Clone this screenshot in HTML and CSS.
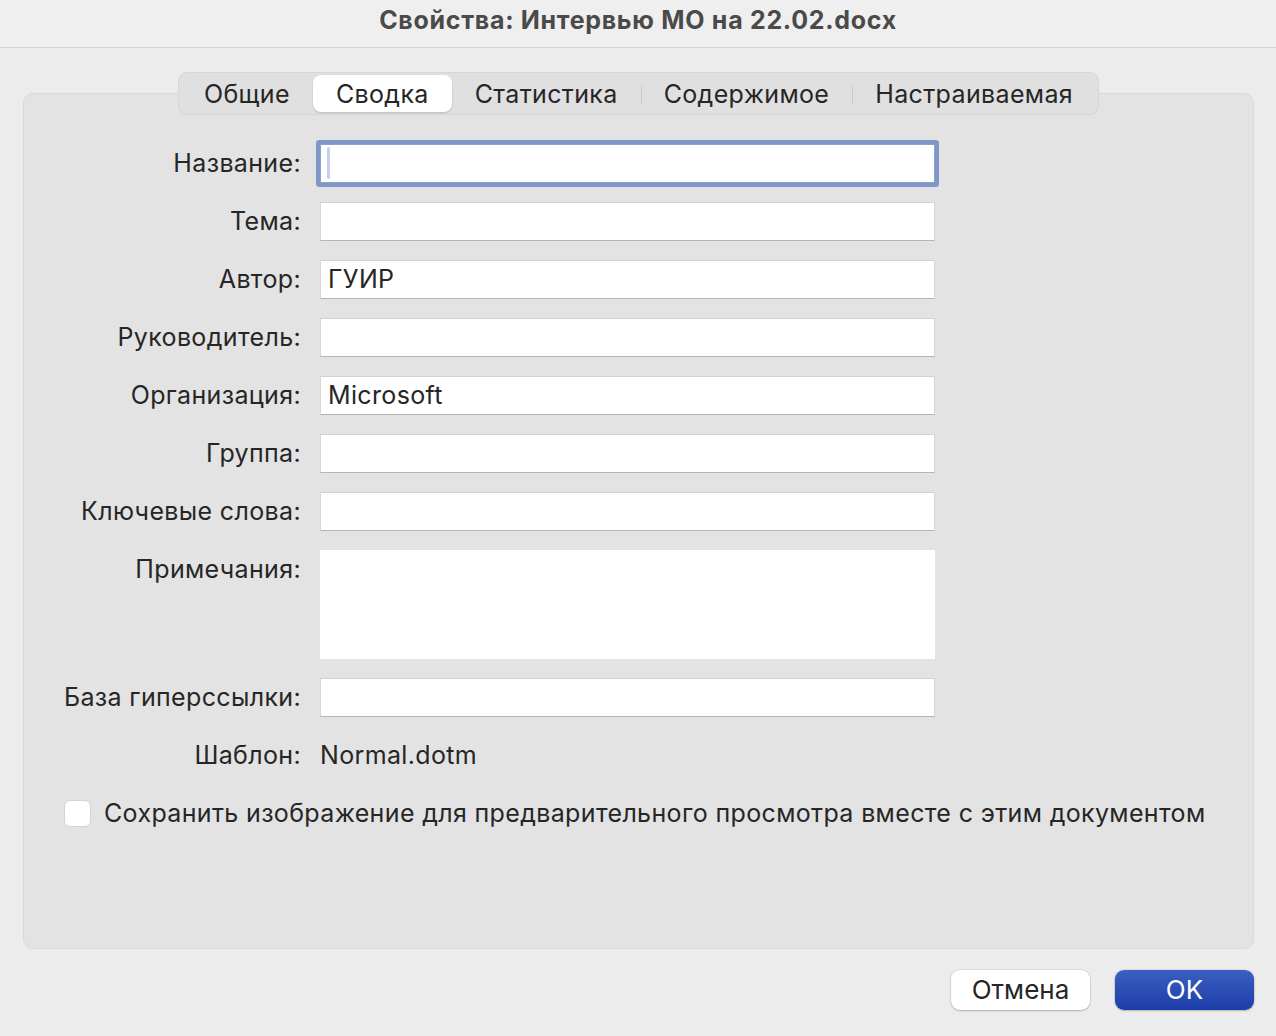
FILE: index.html
```html
<!DOCTYPE html>
<html lang="ru">
<head>
<meta charset="utf-8">
<title>Свойства</title>
<link rel="stylesheet" href="styles.css">
</head>
<body>
<div class="window">
  <div class="titlebar">Свойства: Интервью МО на 22.02.docx</div>
  <div class="content">
    <div class="tabs">
      <div class="tab">Общие</div>
      <div class="tab active">Сводка</div>
      <div class="tab">Статистика</div>
      <div class="tab sep">Содержимое</div>
      <div class="tab sep">Настраиваемая</div>
    </div>
    <div class="panel">
      <div class="form">
        <label class="lbl">Название:</label>
        <div class="field focused"><span class="caret"></span></div>
        <label class="lbl">Тема:</label>
        <div class="field"></div>
        <label class="lbl">Автор:</label>
        <div class="field">ГУИР</div>
        <label class="lbl">Руководитель:</label>
        <div class="field"></div>
        <label class="lbl">Организация:</label>
        <div class="field">Microsoft</div>
        <label class="lbl">Группа:</label>
        <div class="field"></div>
        <label class="lbl">Ключевые слова:</label>
        <div class="field"></div>
        <label class="lbl top">Примечания:</label>
        <div class="field area"></div>
        <label class="lbl">База гиперссылки:</label>
        <div class="field"></div>
        <label class="lbl">Шаблон:</label>
        <div class="value">Normal.dotm</div>
        <div class="check-row">
          <span class="checkbox"></span>
          <span class="check-text">Сохранить изображение для предварительного просмотра вместе с этим документом</span>
        </div>
      </div>
    </div>
    <div class="footer">
      <button class="btn">Отмена</button>
      <button class="btn primary">OK</button>
    </div>
  </div>
</div>
</body>
</html>
```
FILE: styles.css
```css
* { box-sizing: border-box; }
html, body { margin: 0; padding: 0; }
body {
  font-family: "Inter", "Noto Sans", sans-serif;
  background: #ececec;
  color: #262626;
}
.window {
  width: 1276px;
  height: 1036px;
  background: #ececec;
  overflow: hidden;
}
.titlebar {
  height: 48px;
  border-bottom: 1px solid #d3d3d3;
  background: #efefef;
  text-align: center;
  font-weight: 700;
  font-size: 25px;
  letter-spacing: 0.7px;
  line-height: 40px;
  color: #4a4a4a;
}
.content {
  padding: 24px 22px 0 23px;
}
.tabs {
  position: relative;
  z-index: 1;
  display: flex;
  width: fit-content;
  margin: 0 auto -22px;
  height: 43px;
  padding: 2px;
  background: #e0e0e0;
  border: 1px solid #d6d6d6;
  border-radius: 9px;
}
.tab {
  position: relative;
  padding: 0 23px;
  font-size: 25px;
  letter-spacing: 0.35px;
  line-height: 39px;
  color: #262626;
  border-radius: 8px;
}
.tab.active {
  background: #fff;
  box-shadow: 0 1px 2px rgba(0,0,0,0.18);
}
.tab.sep::before {
  content: "";
  position: absolute;
  left: 0;
  top: 10px;
  height: 20px;
  border-left: 1px solid #cbcbcb;
}
.panel {
  height: 856px;
  background: #e3e3e3;
  border: 1px solid #d9d9d9;
  border-radius: 10px;
  padding-top: 50px;
}
.form {
  display: grid;
  grid-template-columns: 277px 615px;
  grid-template-rows: repeat(7, 39px) 109px repeat(3, 39px);
  column-gap: 19px;
  row-gap: 19px;
}
.lbl, .value, .check-text, .field {
  font-size: 25px;
  letter-spacing: 0.35px;
}
.lbl {
  text-align: right;
  line-height: 39px;
  color: #262626;
}
.lbl.top { align-self: start; }
.field {
  position: relative;
  background: #fff;
  border-top: 1px solid #d2d2d2;
  border-left: 1px solid #d6d6d6;
  border-right: 1px solid #d6d6d6;
  border-bottom: 1px solid #b5b5b5;
  line-height: 37px;
  padding-left: 7px;
  color: #262626;
}
.field.area {
  height: 109px;
  border: none;
}
.field.focused {
  border: 1px solid #8da1cf;
  box-shadow: 0 0 0 4px #7f96c7;
  border-radius: 1px;
}
.caret {
  position: absolute;
  left: 6px;
  top: 2px;
  width: 3px;
  height: 32px;
  background: #c4d0ee;
  border-radius: 2px;
}
.value {
  line-height: 39px;
  color: #262626;
}
.check-row {
  grid-column: 1 / span 2;
  display: flex;
  align-items: center;
  padding-left: 40px;
  white-space: nowrap;
}
.checkbox {
  width: 27px;
  height: 27px;
  background: #fff;
  border: 1px solid #d4d4d4;
  border-radius: 6px;
  margin-right: 13px;
  flex: none;
}
.check-text {
  line-height: 39px;
  color: #262626;
}
.footer {
  display: flex;
  justify-content: flex-end;
  gap: 25px;
  padding-top: 21px;
}
.btn {
  width: 139px;
  height: 40px;
  border-radius: 9px;
  border: none;
  font-family: "Inter", "Noto Sans", sans-serif;
  font-size: 26px;
  line-height: 40px;
  padding: 0;
  background: #fff;
  color: #262626;
  box-shadow: 0 0 0 1px rgba(0,0,0,0.06), 0 1px 2px rgba(0,0,0,0.2);
}
.btn.primary {
  background: linear-gradient(#3b5fc3, #1d3da6);
  color: #fff;
}
```
